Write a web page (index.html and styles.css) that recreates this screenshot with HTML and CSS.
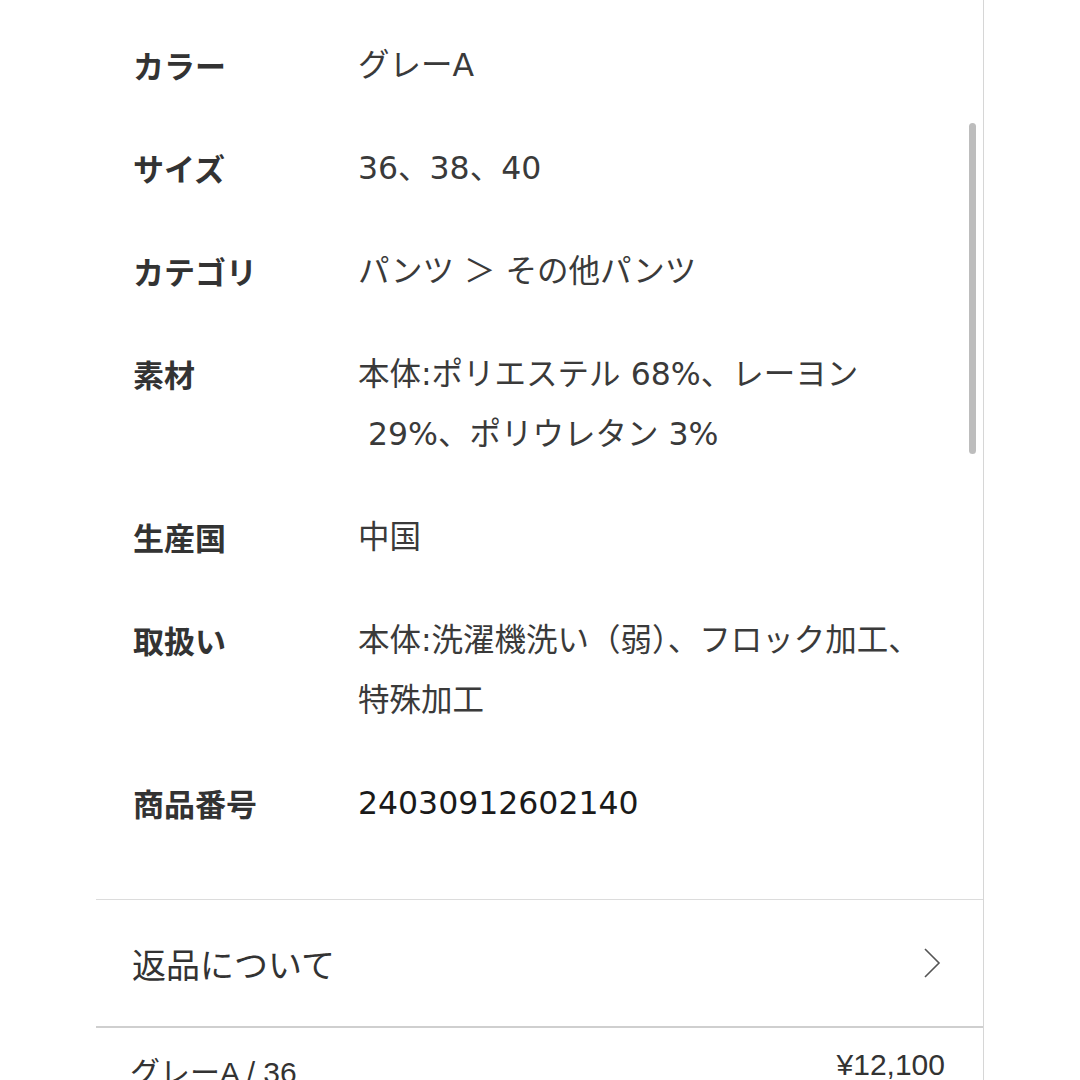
FILE: index.html
```html
<!DOCTYPE html>
<html lang="ja">
<head>
  <meta charset="UTF-8" />
  <meta name="viewport" content="width=device-width, initial-scale=1.0"/>
  <title>商品詳細</title>
  <link rel="stylesheet" href="styles.css">
</head>
<body>
  <div class="panel">
    <div class="spec-list">
      <div class="spec-row">
        <div class="spec-label">カラー</div>
        <div class="spec-value">グレーA</div>
      </div>
      <div class="spec-row">
        <div class="spec-label">サイズ</div>
        <div class="spec-value">36、38、40</div>
      </div>
      <div class="spec-row">
        <div class="spec-label">カテゴリ</div>
        <div class="spec-value">パンツ ＞ その他パンツ</div>
      </div>
      <div class="spec-row">
        <div class="spec-label">素材</div>
        <div class="spec-value">本体:ポリエステル 68%、レーヨン<br>&nbsp;29%、ポリウレタン 3%</div>
      </div>
      <div class="spec-row">
        <div class="spec-label">生産国</div>
        <div class="spec-value">中国</div>
      </div>
      <div class="spec-row">
        <div class="spec-label">取扱い</div>
        <div class="spec-value">本体:洗濯機洗い（弱）、フロック加工、<br>特殊加工</div>
      </div>
      <div class="spec-row">
        <div class="spec-label">商品番号</div>
        <div class="spec-value dark">24030912602140</div>
      </div>
    </div>

    <div class="link-row">
      <span>返品について</span>
      <svg class="chevron" width="18" height="30" viewBox="0 0 18 30">
        <polyline points="2,1 16,15 2,29" fill="none" stroke="#555" stroke-width="1.6"/>
      </svg>
    </div>

    <div class="buy-bar">
      <span>グレーA / 36</span>
      <span>¥12,100</span>
    </div>

    <div class="scroll-thumb"></div>
  </div>
</body>
</html>
```

FILE: styles.css
```css
html, body {
  margin: 0;
  padding: 0;
  height: 100%;
  overflow: hidden;
  background: #ffffff;
}

body {
  font-family: "DejaVu Sans", "Noto Sans CJK JP", sans-serif;
  color: #333;
}

.panel {
  position: relative;
  width: 984px;
  height: 1080px;
  border-right: 1px solid #d6d6d6;
  padding-left: 96px;
  box-sizing: border-box;
}

.spec-list {
  display: flex;
  flex-direction: column;
  gap: 43px;
  padding: 35px 0 66px 37px;
  border-bottom: 1px solid #dcdcdc;
}

.spec-row {
  display: flex;
  font-size: 31.5px;
  line-height: 60px;
}

.spec-label {
  width: 225px;
  flex-shrink: 0;
  font-family: "Noto Sans CJK JP", sans-serif;
  font-size: 31px;
  font-weight: bold;
  color: #333;
}

.spec-value {
  color: #3a3a3a;
}

.spec-value.dark {
  color: #1a1a1a;
}

.link-row {
  display: flex;
  justify-content: space-between;
  align-items: center;
  height: 126px;
  padding: 0 42px 0 36px;
  border-bottom: 2px solid #cfcfcf;
  font-family: "Noto Sans CJK JP", sans-serif;
  font-size: 34px;
  color: #333;
}

.chevron {
  display: block;
}

.buy-bar {
  display: flex;
  justify-content: space-between;
  padding: 20px 38px 0 34px;
  font-family: "Liberation Sans Narrow", "Liberation Sans", "Noto Sans CJK JP", sans-serif;
  font-stretch: condensed;
  font-size: 30px;
  color: #333;
}

.scroll-thumb {
  position: absolute;
  left: 969px;
  top: 123px;
  width: 7px;
  height: 331px;
  border-radius: 4px;
  background: #bdbdbd;
}
```
